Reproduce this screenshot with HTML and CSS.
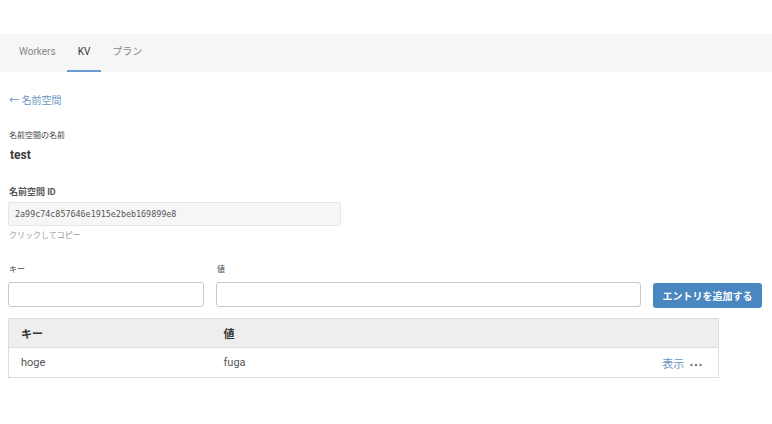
FILE: index.html
```html
<!DOCTYPE html>
<html lang="ja">
<head>
    <meta charset="UTF-8">
    <meta name="viewport" content="width=device-width, initial-scale=1.0">
    <title>KV</title>
    <link rel="stylesheet" href="styles.css">
</head>
<body>
    <div class="topspace"></div>
    <!-- タブ -->
    <div class="tabs">
        <a class="tab" href="javascript:;">Workers</a>
        <a class="tab active" href="javascript:;">KV</a>
        <a class="tab" href="javascript:;">プラン</a>
    </div>

    <div class="content">
        <a class="back" href="javascript:;">&larr; 名前空間</a>

        <div class="label first">名前空間の名前</div>
        <div class="ns-name">test</div>

        <div class="label strong idlabel">名前空間 ID</div>
        <div class="idbox">2a99c74c857646e1915e2beb169899e8</div>
        <div class="hint">クリックしてコピー</div>

        <!-- エントリ追加 -->
        <div class="entry-form">
            <div class="label">キー</div>
            <div class="label">値</div>
            <div></div>
            <input class="field" type="text">
            <input class="field" type="text">
            <button class="add-btn">エントリを追加する</button>
        </div>

        <table class="kv-table">
            <tr class="head">
                <th class="col-key">キー</th>
                <th>値</th>
                <th></th>
            </tr>
            <tr>
                <td class="col-key">hoge</td>
                <td>fuga</td>
                <td class="actions">
                    <a href="javascript:;">表示</a>
                    <svg class="more" width="12" height="4" viewBox="0 0 12 4">
                        <circle cx="1.5" cy="2" r="1.2"/>
                        <circle cx="6" cy="2" r="1.2"/>
                        <circle cx="10.5" cy="2" r="1.2"/>
                    </svg>
                </td>
            </tr>
        </table>
    </div>
</body>
</html>
```

FILE: styles.css
```css
*{
    margin: 0;
    padding: 0;
    box-sizing: border-box;
}
body{
    font-family: Roboto, "Noto Sans CJK JP", sans-serif;
    color: #333;
    background: #fff;
}
.topspace{
    height: 34px;
}
.tabs{
    height: 38px;
    background-color: #f6f6f6;
    display: flex;
    padding-left: 8px;
}
.tab{
    display: block;
    padding: 0 11px;
    font-size: 10px;
    line-height: 36px;
    color: #888;
    text-decoration: none;
    border-bottom: 2px solid transparent;
}
.tab.active{
    color: #333;
    border-bottom-color: #6b9bcf;
}
.content{
    padding: 0 10px 0 8px;
}
.back{
    display: block;
    margin-top: 22px;
    padding-left: 1px;
    font-size: 10px;
    line-height: 14px;
    color: #6b95c2;
    text-decoration: none;
}
.label{
    padding-left: 1px;
    font-size: 8px;
    line-height: 12px;
    color: #444;
}
.label.first{
    margin-top: 22px;
}
.label.strong{
    font-weight: bold;
    font-size: 9px;
    color: #555;
}
.ns-name{
    margin-top: 5px;
    padding-left: 2px;
    font-size: 12px;
    line-height: 16px;
    font-weight: bold;
    color: #3a3a3a;
}
.idlabel{
    margin-top: 23px;
}
.idbox{
    margin-top: 4px;
    width: 333px;
    height: 24px;
    padding-left: 6px;
    background-color: #f6f6f6;
    border: 1px solid #e6e6e6;
    border-radius: 2px;
    font-family: "DejaVu Sans Mono", monospace;
    font-size: 8.4px;
    line-height: 22px;
    color: #555;
}
.hint{
    margin-top: 4px;
    padding-left: 1px;
    font-size: 8px;
    line-height: 12px;
    color: #999;
}
.entry-form{
    margin-top: 22px;
    display: grid;
    grid-template-columns: 196px 1fr 109px;
    column-gap: 12px;
    row-gap: 6px;
}
.field{
    height: 25px;
    border: 1px solid #c9c9c9;
    border-radius: 3px;
    background: #fff;
}
.add-btn{
    margin-top: 1px;
    height: 25px;
    border: none;
    border-radius: 3px;
    background-color: #4a87c0;
    color: #fff;
    font-family: Roboto, "Noto Sans CJK JP", sans-serif;
    font-size: 10px;
    font-weight: bold;
}
.kv-table{
    margin-top: 10px;
    width: 711px;
    border-collapse: collapse;
    border: 1px solid #dcdcdc;
    font-size: 11px;
}
.kv-table th{
    height: 29px;
    background-color: #eeeeee;
    text-align: left;
    padding-left: 12px;
    font-weight: bold;
    color: #333;
    border-bottom: 1px solid #dcdcdc;
}
.kv-table td{
    height: 30px;
    padding-left: 12px;
    color: #555;
}
.kv-table .col-key{
    width: 203px;
}
.kv-table .actions{
    text-align: right;
    padding-right: 16px;
}
.actions a{
    color: #6b95c2;
    text-decoration: none;
}
.more{
    margin-left: 3px;
    fill: #777;
    vertical-align: middle;
}
```
